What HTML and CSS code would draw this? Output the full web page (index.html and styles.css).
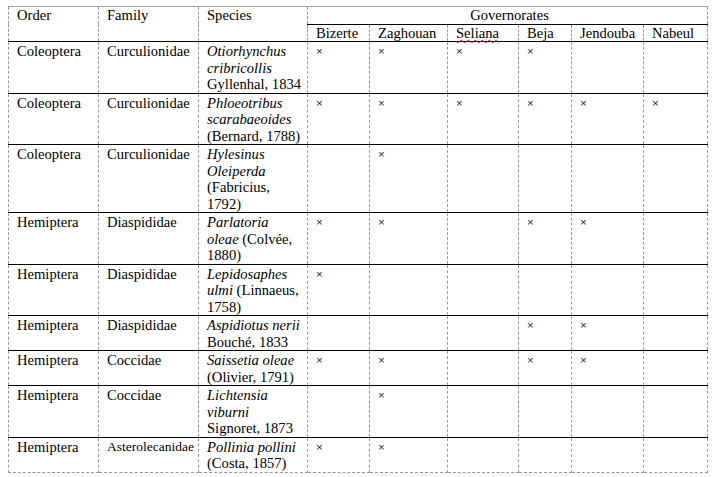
FILE: index.html
```html
<!DOCTYPE html>
<html>
<head>
<meta charset="utf-8">
<link rel="stylesheet" href="styles.css">
</head>
<body>
<table class="grid">
  <colgroup>
    <col class="c-order">
    <col class="c-family">
    <col class="c-species">
    <col class="c-biz">
    <col class="c-zag">
    <col class="c-sel">
    <col class="c-beja">
    <col class="c-jen">
    <col class="c-nab">
  </colgroup>
  <thead>
    <tr class="hrow top">
      <th rowspan="2">Order</th>
      <th rowspan="2">Family</th>
      <th rowspan="2">Species</th>
      <th colspan="6" class="gov">Governorates</th>
    </tr>
    <tr class="hrow sub">
      <th>Bizerte</th>
      <th>Zaghouan</th>
      <th><span class="spell">Seliana</span></th>
      <th>Beja</th>
      <th>Jendouba</th>
      <th>Nabeul</th>
    </tr>
  </thead>
  <tbody>
    <tr>
      <td>Coleoptera</td><td>Curculionidae</td>
      <td class="sp"><i>Otiorhynchus</i><br><i>cribricollis</i><br>Gyllenhal, 1834</td>
      <td class="x">×</td><td class="x">×</td><td class="x">×</td><td class="x">×</td><td></td><td></td>
    </tr>
    <tr>
      <td>Coleoptera</td><td>Curculionidae</td>
      <td class="sp"><i>Phloeotribus</i><br><i>scarabaeoides</i><br>(Bernard, 1788)</td>
      <td class="x">×</td><td class="x">×</td><td class="x">×</td><td class="x">×</td><td class="x">×</td><td class="x">×</td>
    </tr>
    <tr>
      <td>Coleoptera</td><td>Curculionidae</td>
      <td class="sp"><i>Hylesinus</i><br><i>Oleiperda</i><br>(Fabricius,<br>1792)</td>
      <td></td><td class="x">×</td><td></td><td></td><td></td><td></td>
    </tr>
    <tr>
      <td>Hemiptera</td><td>Diaspididae</td>
      <td class="sp"><i>Parlatoria</i><br><i>oleae</i> (Colvée,<br>1880)</td>
      <td class="x">×</td><td class="x">×</td><td></td><td class="x">×</td><td class="x">×</td><td></td>
    </tr>
    <tr>
      <td>Hemiptera</td><td>Diaspididae</td>
      <td class="sp"><i>Lepidosaphes</i><br><i>ulmi</i> (Linnaeus,<br>1758)</td>
      <td class="x">×</td><td></td><td></td><td></td><td></td><td></td>
    </tr>
    <tr>
      <td>Hemiptera</td><td>Diaspididae</td>
      <td class="sp"><i>Aspidiotus nerii</i><br>Bouché, 1833</td>
      <td></td><td></td><td></td><td class="x">×</td><td class="x">×</td><td></td>
    </tr>
    <tr>
      <td>Hemiptera</td><td>Coccidae</td>
      <td class="sp"><i>Saissetia oleae</i><br>(Olivier, 1791)</td>
      <td class="x">×</td><td class="x">×</td><td></td><td class="x">×</td><td class="x">×</td><td></td>
    </tr>
    <tr>
      <td>Hemiptera</td><td>Coccidae</td>
      <td class="sp"><i>Lichtensia</i><br><i>viburni</i><br>Signoret, 1873</td>
      <td></td><td class="x">×</td><td></td><td></td><td></td><td></td>
    </tr>
    <tr class="last">
      <td>Hemiptera</td><td class="small">Asterolecanidae</td>
      <td class="sp"><i>Pollinia pollini</i><br>(Costa, 1857)</td>
      <td class="x">×</td><td class="x">×</td><td></td><td></td><td></td><td></td>
    </tr>
  </tbody>
</table>
</body>
</html>
```

FILE: styles.css
```css
html, body {
  background: #fff;
}
body {
  margin: 6px 0 0 8px;
  font-family: "Liberation Serif", "Times New Roman", serif;
  font-size: 14.6px;
  line-height: 16.5px;
  color: #000;
}
.grid {
  border-collapse: collapse;
  table-layout: fixed;
  width: 700px;
  border-top: 1px solid #a0a0a0;
  border-left: 1px dashed #999;
  border-right: 1px dashed #999;
  border-bottom: 1px dashed #999;
}
.c-order { width: 90px; }
.c-family { width: 100px; }
.c-species { width: 109px; }
.c-biz { width: 62px; }
.c-zag { width: 78px; }
.c-sel { width: 71px; }
.c-beja { width: 53px; }
.c-jen { width: 72px; }
.c-nab { width: 64px; }

.grid th, .grid td {
  text-align: left;
  vertical-align: top;
  font-weight: normal;
  padding: 1px 4px 0 8px;
  border-left: 1px dashed #999;
  border-right: 1px dashed #999;
  border-bottom: 1px solid #000;
  white-space: nowrap;
}
.grid th {
  padding-top: 0;
}
.grid .gov {
  text-align: center;
}
.grid tr.top th {
  border-top: 1px solid #a0a0a0;
}
.grid tr.last td {
  border-bottom: 1px dashed #999;
}
.spell {
  text-decoration-line: underline;
  text-decoration-style: wavy;
  text-decoration-color: #e0302a;
  text-decoration-thickness: 1px;
  text-decoration-skip-ink: none;
  text-underline-offset: 1px;
}
.grid td.x {
  font-family: "Liberation Sans", Arial, sans-serif;
  font-size: 11.5px;
  color: #2a2a2a;
  padding-top: 3px;
  line-height: 13px;
}
.grid td.small {
  font-size: 13.5px;
}
```
